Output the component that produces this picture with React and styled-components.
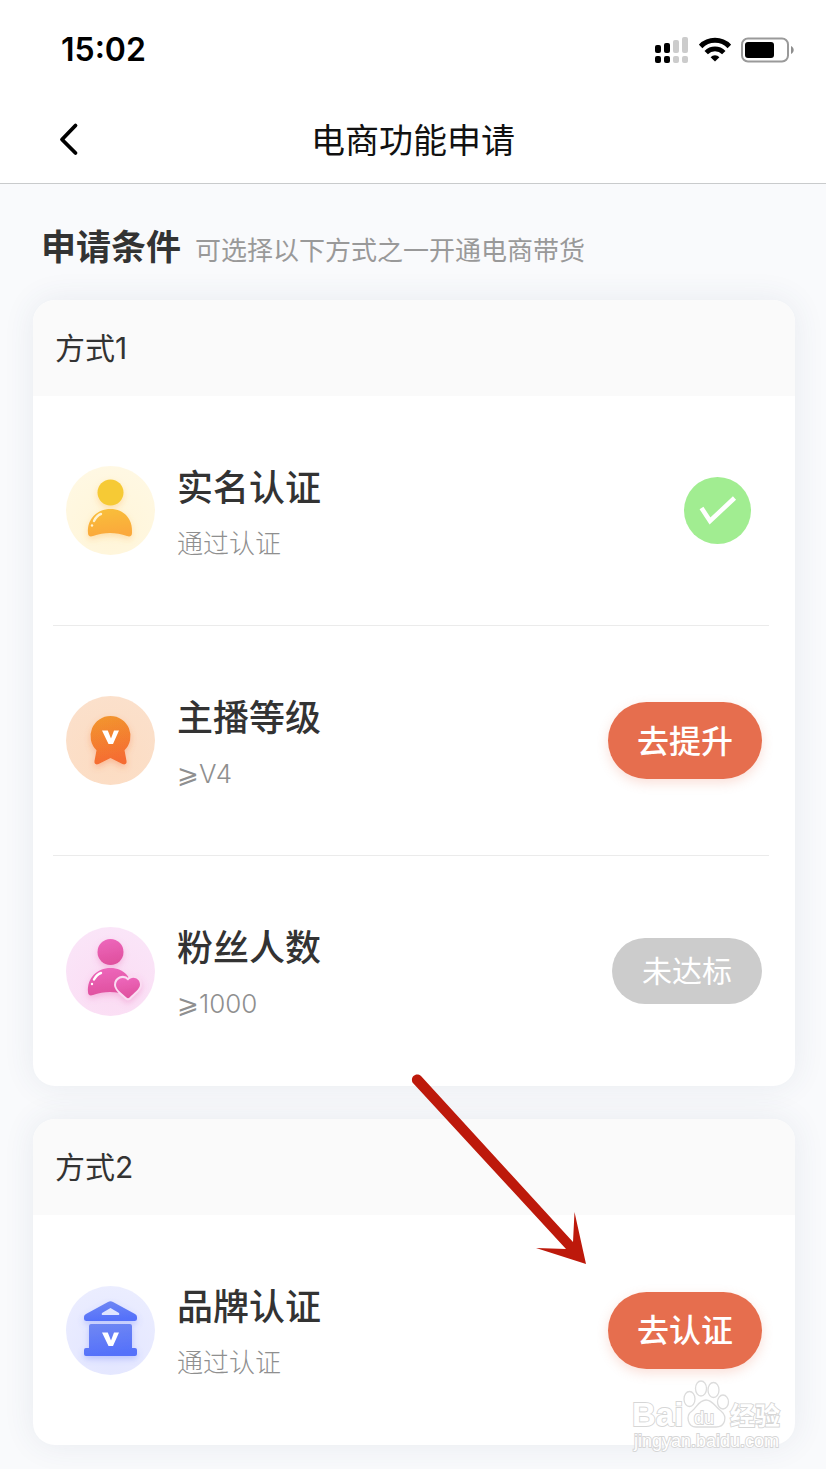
import React from "react";
import styled, { createGlobalStyle } from "styled-components";

const GlobalStyle = createGlobalStyle`
  * {
    box-sizing: border-box;
  }

  body {
    margin: 0;
    background: #f9fafc;
    color: #333;
    font-family: Inter, "Noto Sans CJK SC", sans-serif;
  }

  h1, h2, h3, p, ul {
    margin: 0;
    padding: 0;
  }
`;

// Layout
const Page = styled.div`
  position: relative;
  min-height: 100vh;
  overflow: hidden;
`;

const Header = styled.header`
  background: #fff;
  border-bottom: 1px solid #c9cbcc;
`;

const StatusBar = styled.div`
  display: flex;
  align-items: center;
  justify-content: space-between;
  height: 98px;
  padding: 2px 32px 0 61px;
`;

const Time = styled.span`
  font-size: 32px;
  font-weight: 600;
  line-height: 40px;
  color: #000;
`;

const StatusIcons = styled.div`
  display: flex;
  align-items: center;
  gap: 10px;
`;

const NavBar = styled.nav`
  display: grid;
  grid-template-columns: 100px 1fr 100px;
  align-items: center;
  height: 85px;
`;

const BackButton = styled.button`
  display: flex;
  align-items: center;
  justify-content: flex-end;
  height: 60px;
  padding: 0 20px 4px 0;
  border: none;
  background: transparent;
  cursor: pointer;
`;

const NavTitle = styled.h1`
  font-size: 34px;
  font-weight: 400;
  line-height: 48px;
  text-align: center;
  color: #111;
`;

const Content = styled.main`
  display: flex;
  flex-direction: column;
  gap: 33px;
  padding: 36px 31px 24px 33px;
`;

const SectionHead = styled.div`
  display: flex;
  align-items: baseline;
  gap: 14px;
  height: 47px;
  padding: 1px 0 0 8px;
`;

const SectionTitle = styled.h2`
  font-size: 35px;
  font-weight: 700;
  line-height: 52px;
`;

const SectionHint = styled.p`
  font-size: 26px;
  line-height: 36px;
  color: #999;
`;

const Card = styled.section`
  border-radius: 22px;
  background: #fff;
  box-shadow: 0 0 32px rgba(60, 80, 110, 0.09);
`;

const CardHeader = styled.h3`
  height: 96px;
  padding: 0 22px;
  border-radius: 22px 22px 0 0;
  background: #fafafa;
  font-size: 30px;
  font-weight: 400;
  line-height: 96px;
`;

const RowList = styled.ul`
  padding: 0 26px 0 20px;
  list-style: none;
`;

const Row = styled.li`
  display: flex;
  align-items: center;
  gap: 22px;
  height: 230px;
  padding: 0 7px 0 13px;

  &:not(:last-child) {
    border-bottom: 1px solid #ebebeb;
  }
`;

const RowText = styled.div`
  flex: 1;
  display: flex;
  flex-direction: column;
  gap: 14px;
  padding-top: 4px;
`;

const RowTitle = styled.span`
  font-size: 36px;
  font-weight: 500;
  line-height: 48px;
`;

const RowSub = styled.span`
  font-size: 26px;
  font-weight: 300;
  line-height: 36px;
  color: #8f8f8f;
`;

const PillButton = styled.button`
  width: ${({ disabled }) => (disabled ? "150px" : "154px")};
  height: ${({ disabled }) => (disabled ? "66px" : "77px")};
  padding: 0 0 4px;
  border: none;
  border-radius: 39px;
  background: ${({ disabled }) => (disabled ? "#ccc" : "#e66e4e")};
  box-shadow: ${({ disabled }) =>
    disabled ? "none" : "0 4px 12px rgba(230, 110, 78, 0.22)"};
  color: #fff;
  font-family: inherit;
  font-size: ${({ disabled }) => (disabled ? "30px" : "32px")};
  font-weight: ${({ disabled }) => (disabled ? 400 : 500)};
  cursor: ${({ disabled }) => (disabled ? "default" : "pointer")};
`;

const Passed = styled.span`
  display: flex;
  margin-right: 11px;
`;

const Pointer = styled.svg`
  position: absolute;
  top: 1070px;
  left: 49%;
  pointer-events: none;
`;

const Watermark = styled.svg`
  position: absolute;
  right: 42px;
  bottom: 15px;
  pointer-events: none;
`;

// Icons
const SignalIcon = () => (
  <svg width="34" height="28" viewBox="0 0 34 28">
    <g fill="#000">
      <rect x="0" y="9" width="6" height="8" rx="2" />
      <rect x="9" y="7" width="6" height="10" rx="2" />
      <rect x="0" y="20" width="6" height="7" rx="2" />
      <rect x="9" y="20" width="6" height="7" rx="2" />
    </g>
    <g fill="#ccc">
      <rect x="18" y="4" width="6" height="13" rx="2" />
      <rect x="27" y="1" width="6" height="16" rx="2" />
      <rect x="18" y="20" width="6" height="7" rx="2" />
      <rect x="27" y="20" width="6" height="7" rx="2" />
    </g>
  </svg>
);

const WifiIcon = () => (
  <svg width="32" height="26" viewBox="0 0 32 26">
    <path d="M1.6 9.4A20 20 0 0 1 30.4 9.4" fill="none" stroke="#000" strokeWidth="5" />
    <path d="M7.200 15.600A12.400 12.400 0 0 1 24.800 15.600" fill="none" stroke="#000" strokeWidth="4.800" />
    <path d="M11.6 20.2A6.2 6.2 0 0 1 20.4 20.2L16 24.6Z" fill="#000" />
  </svg>
);

const BatteryIcon = () => (
  <svg width="53" height="26" viewBox="0 0 53 26">
    <rect x="1" y="1.5" width="46" height="23" rx="6" fill="none" stroke="#9a9a9a" strokeWidth="2" />
    <rect x="4" y="5" width="29" height="16" rx="3" fill="#000" />
    <path d="M50 9C53.6 10.5 53.6 15.5 50 17Z" fill="#8e8e8e" />
  </svg>
);

const BackIcon = () => (
  <svg width="24" height="34" viewBox="0 0 24 34">
    <path d="M19.5 3.5L6 17.5L19.5 31" fill="none" stroke="#000" strokeWidth="3.8" strokeLinecap="round" strokeLinejoin="round" />
  </svg>
);

const Badge = ({ id, bg, from, to, shadow, children }) => (
  <svg width="89" height="89" viewBox="0 0 89 89">
    <defs>
      <linearGradient id={id} x1="0" y1="0" x2="0.2" y2="1">
        <stop offset="0" stopColor={from} />
        <stop offset="1" stopColor={to} />
      </linearGradient>
      <radialGradient id={`${id}-bg`} cx="0.5" cy="0.75" r="0.75">
        <stop offset="0" stopColor={bg[0]} />
        <stop offset="1" stopColor={bg[1]} />
      </radialGradient>
      <filter id={`${id}-shadow`} x="-30%" y="-30%" width="160%" height="160%">
        <feDropShadow dx="0" dy="3" stdDeviation="3" floodColor={shadow} floodOpacity="0.3" />
      </filter>
    </defs>
    <circle cx="44.5" cy="44.5" r="44.5" fill={`url(#${id}-bg)`} />
    <g fill={`url(#${id})`} filter={`url(#${id}-shadow)`}>
      {children}
    </g>
  </svg>
);

const RealNameIcon = () => (
  <Badge id="real-name" bg={["#fff5d8", "#fff8e3"]} from="#f8c03a" to="#fba93a" shadow="#fba93a">
    <circle cx="44.5" cy="26.5" r="13" fill="#f6ca35" />
    <path d="M22 67C21 53 31 43 44.5 43C58 43 67 53 66 67C66 70 64 71 61 70C50 66 38 66 27 70C24 71 22 70 22 67Z" />
    <path d="M28 55C30 51 32 49 35 48" fill="none" stroke="#fff2cf" strokeWidth="2.4" strokeLinecap="round" />
    <circle cx="26" cy="59.5" r="1.2" fill="#fff2cf" />
  </Badge>
);

const LevelIcon = () => (
  <Badge id="level" bg={["#fcdcc2", "#fbe0cb"]} from="#f2982f" to="#f56c30" shadow="#f3652c">
    <path d="M44.5 20A20 20 0 0 1 58.5 54.3L60.5 65C61 68 59 69 56.5 68L44.5 62L32.5 68C30 69 28 68 28.5 65L30.5 54.3A20 20 0 0 1 44.5 20Z" />
    <path d="M36 34.5H41.8L45 42.5L48 34.5H53L47 48H42.5Z" fill="#fff" />
  </Badge>
);

const FansIcon = () => (
  <Badge id="fans" bg={["#fbdcf3", "#fae5f8"]} from="#ee68bd" to="#e0519f" shadow="#e459ac">
    <circle cx="44.5" cy="25" r="13" />
    <path d="M22 65C21 51 31 41 44.5 41C58 41 67 51 66 65C66 68 64 69 61 68C50 64 38 64 27 68C24 69 22 68 22 65Z" />
    <path d="M28 52.5C30 49 32 47 35 46" fill="none" stroke="#fff" strokeWidth="2.4" strokeLinecap="round" />
    <circle cx="26" cy="57" r="1.2" fill="#fff" />
    <path d="M62 53.5C57 48 50 52 50 58C50 63 57 67 60.5 70.5Q62 72 63.5 70.5C68 66 74 62 74 57.5C74 51 66 48 62 53.5Z" stroke="#fadcf2" strokeWidth="4" paintOrder="stroke" />
  </Badge>
);

const BrandIcon = () => (
  <Badge id="brand" bg={["#e2e5ff", "#ebedff"]} from="#7088f3" to="#5571fa" shadow="#5a72f8">
    <path d="M42 16Q44.5 14.5 47 16L69 28Q71 29 71 31V33Q71 35 68.5 35H20.5Q18 35 18 33V31Q18 29 20 28Z" />
    <path d="M44.5 22L53 27Q54 29 52 29H37Q35 29 36 27Z" fill="#dfe4ff" />
    <path d="M25 38H64Q66 38 66 40V62H69Q71 62 71 64V68Q71 70 69 70H20Q18 70 18 68V64Q18 62 20 62H23V40Q23 38 25 38Z" />
    <path d="M36 46.5H41.8L45 54.5L48 46.5H53L47 60H42.5Z" fill="#fff" />
  </Badge>
);

const CheckIcon = () => (
  <svg width="67" height="67" viewBox="0 0 67 67" role="img" aria-label="已通过">
    <circle cx="33.5" cy="33.5" r="33.5" fill="#a1ed91" />
    <path d="M17.5 31L26 44L50.5 21" fill="none" stroke="#fff" strokeWidth="4.6" />
  </svg>
);

const METHODS = [
  {
    name: "方式1",
    rows: [
      { title: "实名认证", sub: "通过认证", icon: RealNameIcon, passed: true },
      { title: "主播等级", sub: "⩾V4", icon: LevelIcon, action: "去提升" },
      { title: "粉丝人数", sub: "⩾1000", icon: FansIcon, action: "未达标", disabled: true },
    ],
  },
  {
    name: "方式2",
    rows: [{ title: "品牌认证", sub: "通过认证", icon: BrandIcon, action: "去认证" }],
  },
];

const MethodCard = ({ method }) => (
  <Card>
    <CardHeader>{method.name}</CardHeader>
    <RowList>
      {method.rows.map(({ title, sub, icon: Icon, passed, action, disabled }) => (
        <Row key={title}>
          <Icon />
          <RowText>
            <RowTitle>{title}</RowTitle>
            <RowSub>{sub}</RowSub>
          </RowText>
          {passed ? (
            <Passed>
              <CheckIcon />
            </Passed>
          ) : (
            <PillButton type="button" disabled={disabled}>
              {action}
            </PillButton>
          )}
        </Row>
      ))}
    </RowList>
  </Card>
);

const App = () => (
  <>
    <GlobalStyle />
    <Page>
      <Header>
        <StatusBar>
          <Time>15:02</Time>
          <StatusIcons>
            <SignalIcon />
            <WifiIcon />
            <BatteryIcon />
          </StatusIcons>
        </StatusBar>
        <NavBar>
          <BackButton type="button" aria-label="返回">
            <BackIcon />
          </BackButton>
          <NavTitle>电商功能申请</NavTitle>
        </NavBar>
      </Header>
      <Content>
        <SectionHead>
          <SectionTitle>申请条件</SectionTitle>
          <SectionHint>可选择以下方式之一开通电商带货</SectionHint>
        </SectionHead>
        {METHODS.map((method) => (
          <MethodCard key={method.name} method={method} />
        ))}
      </Content>
      <Pointer width="190" height="200" viewBox="405 1070 190 200">
        <path d="M412.5 1082.5C410 1077 416 1072 421 1076L573 1242L574.5 1212L586 1264L536 1248L566 1249Z" fill="#bd190b" />
      </Pointer>
      <Watermark width="152" height="76" viewBox="0 0 152 76">
        <g fill="#fff" stroke="#dcdcdc" strokeWidth="1.3">
          <ellipse cx="57.5" cy="21" rx="5.5" ry="7.5" />
          <ellipse cx="69" cy="10.5" rx="5.5" ry="7.5" />
          <ellipse cx="81.5" cy="12" rx="5.5" ry="7.5" />
          <ellipse cx="91" cy="24" rx="5.5" ry="7" />
          <path d="M74 22C67 22 65 29 60 33C53 38 56 49 64 49H84C93 49 96 39 89 33C83 29 81 22 74 22Z" />
        </g>
        <g fill="#fff" stroke="#d6d6d6" strokeWidth="1.8" paintOrder="stroke" fontFamily='"Liberation Sans", "Noto Sans CJK SC", sans-serif' fontWeight="700">
          <text x="0" y="48" fontSize="33">Bai</text>
          <text x="62" y="46" fontSize="18" fontWeight="400">du</text>
          <text x="98" y="47" fontSize="25">经验</text>
          <text x="2" y="69" fontSize="18" fontWeight="400">jingyan.baidu.com</text>
        </g>
      </Watermark>
    </Page>
  </>
);

export default App;
